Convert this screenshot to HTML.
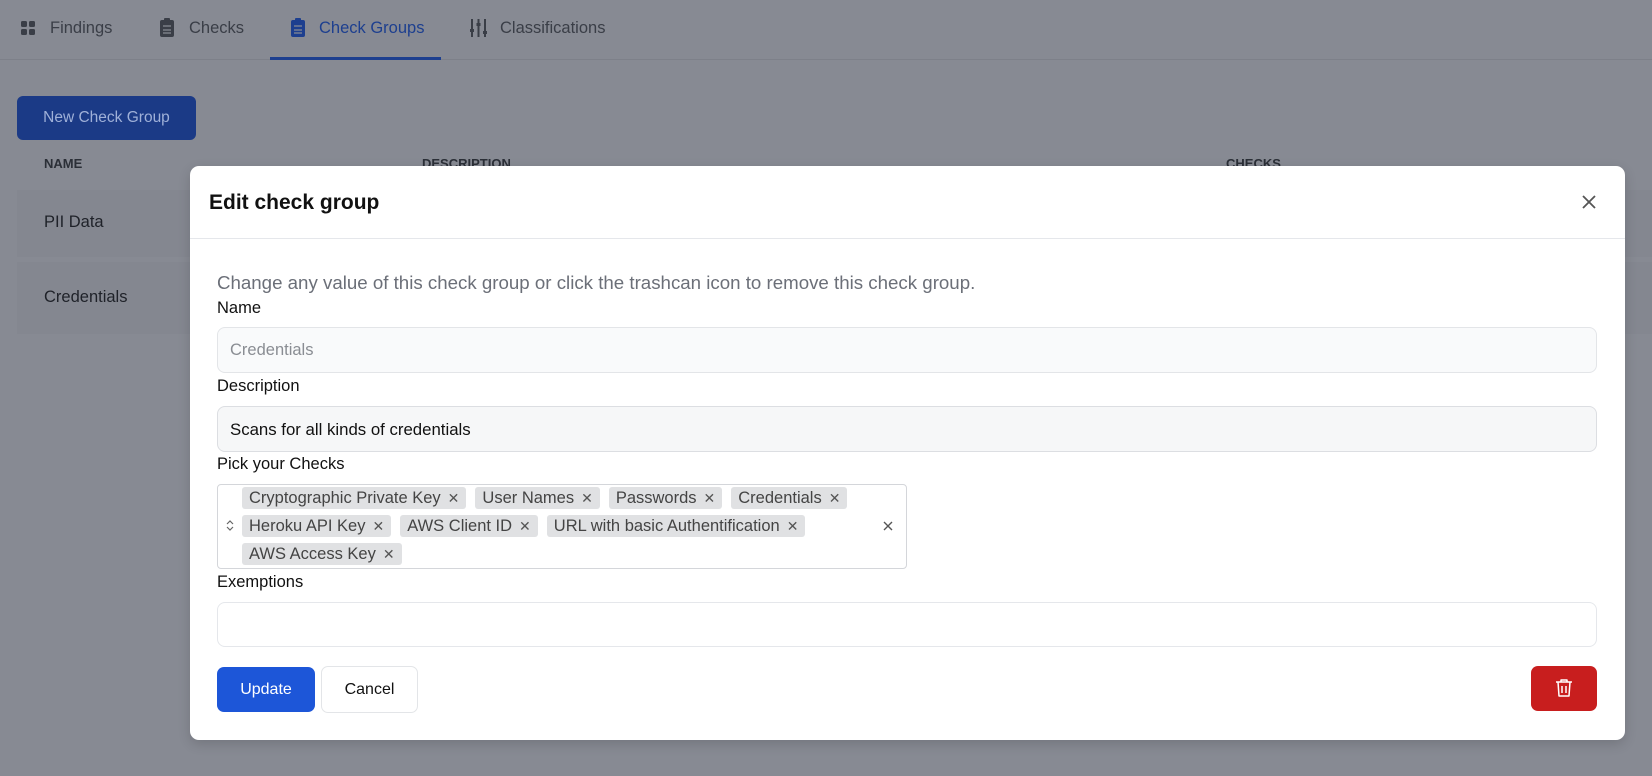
<!DOCTYPE html>
<html><head><meta charset="utf-8"><style>
*{box-sizing:border-box;margin:0;padding:0}
body{width:1652px;height:776px;overflow:hidden;background:#878a93;font-family:"Liberation Sans",Arial,sans-serif;position:relative}
.a{position:absolute;white-space:nowrap}
.tab{font-size:16.5px;color:#3a3e47;top:19px}
.lbl{font-size:16.5px;color:#111}
.inp{position:absolute;left:217px;width:1380px;border:1px solid #e3e5e8;border-radius:8px;background:#f9fafb}
.chip{display:inline-flex;align-items:center;height:22px;background:#e0e1e3;border-radius:3px;padding:0 7px;font-size:16.5px;color:#444;margin-right:9px}
.chip span{margin-left:7px;font-size:14px;color:#555}
.row{position:absolute;left:242px;display:flex}
</style></head><body>
<div class="a" style="left:0;top:59px;width:1652px;height:1px;background:#7d8089"></div>
<svg class="a" style="left:21px;top:20px" width="15" height="16" viewBox="0 0 15 16"><rect x="0" y="1" width="6" height="6" rx="1.5" fill="#3a3e47"/><rect x="8" y="1" width="6" height="6" rx="1.5" fill="#3a3e47"/><rect x="0" y="9" width="6" height="6" rx="1.5" fill="#3a3e47"/><rect x="8" y="9" width="6" height="6" rx="1.5" fill="#3a3e47"/></svg>
<div class="a tab" style="left:50px">Findings</div>
<svg class="a" style="left:160px;top:18px" width="14" height="19" viewBox="0 0 14 19"><rect x="0" y="2" width="14" height="17" rx="2" fill="#3a3e47"/><rect x="4" y="0" width="6" height="4" rx="1" fill="#3a3e47"/><path d="M3 8h8M3 12h8M3 15h8" stroke="#878a93" stroke-width="1.3"/></svg>
<div class="a tab" style="left:189px">Checks</div>
<svg class="a" style="left:291px;top:18px" width="14" height="19" viewBox="0 0 14 19"><rect x="0" y="2" width="14" height="17" rx="2" fill="#1d3f8f"/><rect x="4" y="0" width="6" height="4" rx="1" fill="#1d3f8f"/><path d="M3 8h8M3 12h8M3 15h8" stroke="#878a93" stroke-width="1.3"/></svg>
<div class="a tab" style="left:319px;color:#1d3f8f">Check Groups</div>
<div class="a" style="left:270px;top:57px;width:171px;height:3px;background:#1d3f8f"></div>
<svg class="a" style="left:470px;top:19px" width="17" height="18" viewBox="0 0 17 18"><path d="M2 0v18M8.5 0v18M15 0v18" stroke="#3a3e47" stroke-width="2"/><rect x="0" y="10" width="4" height="3" fill="#3a3e47"/><rect x="6.5" y="4" width="4" height="3" fill="#3a3e47"/><rect x="13" y="12" width="4" height="3" fill="#3a3e47"/></svg>
<div class="a tab" style="left:500px">Classifications</div>
<div class="a" style="left:17px;top:96px;width:179px;height:44px;background:#1b3a86;border-radius:6px;color:#9fb0d8;font-size:15.5px;line-height:44px;text-align:center">New Check Group</div>
<div class="a" style="left:44px;top:156px;font-size:13px;font-weight:bold;color:#2b2f37">NAME</div>
<div class="a" style="left:422px;top:156px;font-size:13px;font-weight:bold;color:#2b2f37">DESCRIPTION</div>
<div class="a" style="left:1226px;top:156px;font-size:13px;font-weight:bold;color:#2b2f37">CHECKS</div>
<div class="a" style="left:17px;top:190px;width:1635px;height:67px;background:#848790"></div>
<div class="a" style="left:17px;top:262px;width:1635px;height:72px;background:#848790"></div>
<div class="a" style="left:44px;top:213px;font-size:16.5px;color:#1f2229">PII Data</div>
<div class="a" style="left:44px;top:288px;font-size:16.5px;color:#1f2229">Credentials</div>
<div class="a" style="left:190px;top:166px;width:1435px;height:574px;background:#fff;border-radius:9px;box-shadow:0 4px 12px rgba(0,0,0,.15)"></div>
<div class="a" style="left:209px;top:191px;font-size:21px;font-weight:bold;color:#111">Edit check group</div>
<svg class="a" style="left:1582px;top:195px" width="14" height="14" viewBox="0 0 14 14"><path d="M1 1l12 12M13 1L1 13" stroke="#555" stroke-width="1.8"/></svg>
<div class="a" style="left:190px;top:238px;width:1435px;height:1px;background:#e5e7eb"></div>
<div class="a" style="left:217px;top:272px;font-size:18.7px;color:#6b6f78">Change any value of this check group or click the trashcan icon to remove this check group.</div>
<div class="a lbl" style="left:217px;top:299px">Name</div>
<div class="inp" style="top:327px;height:46px"></div>
<div class="a" style="left:230px;top:341px;font-size:16.5px;color:#8a8d93">Credentials</div>
<div class="a lbl" style="left:217px;top:377px">Description</div>
<div class="inp" style="top:406px;height:46px;background:#f6f7f8;border-color:#dcdee2"></div>
<div class="a" style="left:230px;top:420px;font-size:16.8px;color:#111">Scans for all kinds of credentials</div>
<div class="a lbl" style="left:217px;top:455px">Pick your Checks</div>
<div class="a" style="left:217px;top:484px;width:690px;height:85px;border:1px solid #d4d6da;border-radius:4px"></div>
<svg class="a" style="left:226px;top:519px" width="8" height="13" viewBox="0 0 8 13"><path d="M1 5l3-3 3 3M1 8l3 3 3-3" fill="none" stroke="#666" stroke-width="1.2"/></svg>
<svg class="a" style="left:883px;top:521px" width="10" height="10" viewBox="0 0 10 10"><path d="M1 1l8 8M9 1L1 9" stroke="#555" stroke-width="1.4"/></svg>
<div class="row" style="top:487px"><div class="chip">Cryptographic Private Key<span>✕</span></div><div class="chip">User Names<span>✕</span></div><div class="chip">Passwords<span>✕</span></div><div class="chip">Credentials<span>✕</span></div></div>
<div class="row" style="top:515px"><div class="chip">Heroku API Key<span>✕</span></div><div class="chip">AWS Client ID<span>✕</span></div><div class="chip">URL with basic Authentification<span>✕</span></div></div>
<div class="row" style="top:543px"><div class="chip">AWS Access Key<span>✕</span></div></div>
<div class="a lbl" style="left:217px;top:573px">Exemptions</div>
<div class="inp" style="top:602px;height:45px;background:#fff;border-color:#e5e7eb"></div>
<div class="a" style="left:217px;top:667px;width:98px;height:45px;background:#1d56d8;border-radius:7px;color:#fff;font-size:16px;line-height:45px;text-align:center">Update</div>
<div class="a" style="left:321px;top:666px;width:97px;height:47px;background:#fff;border:1px solid #e3e5e8;border-radius:7px;color:#111;font-size:16px;line-height:45px;text-align:center">Cancel</div>
<div class="a" style="left:1531px;top:666px;width:66px;height:45px;background:#c81e1e;border-radius:7px"></div>
<svg class="a" style="left:1555px;top:678px" width="18" height="20" viewBox="0 0 18 20"><path d="M1 4h16M6 4V2h6v2M3 4l1 14h10l1-14M7 8v7M11 8v7" fill="none" stroke="#fff" stroke-width="1.5" stroke-linejoin="round"/></svg>
</body></html>
